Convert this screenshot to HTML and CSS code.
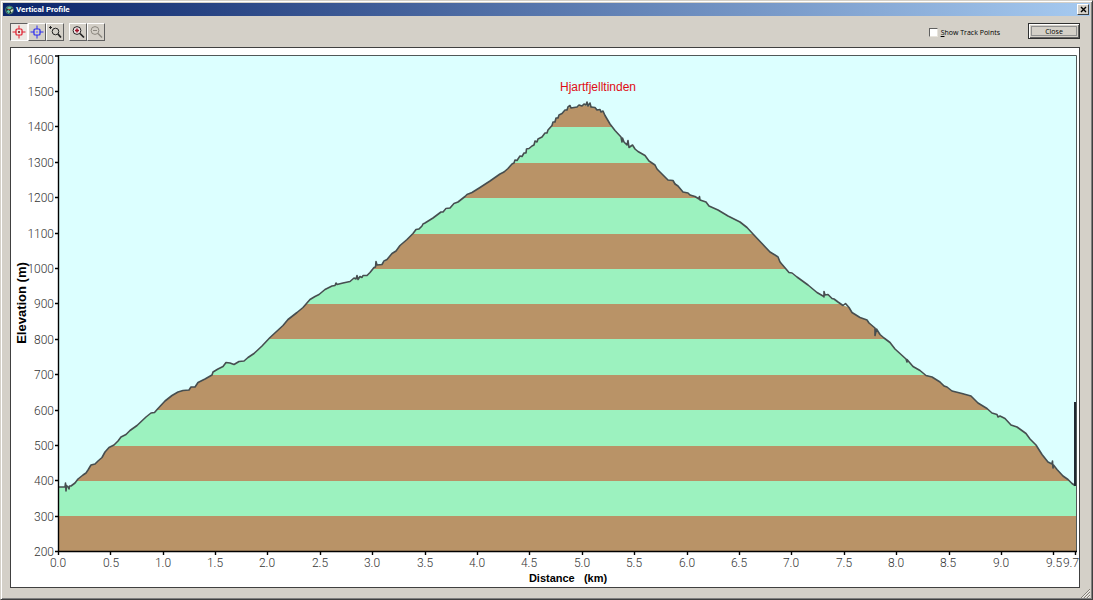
FILE: index.html
```
<!DOCTYPE html>
<html lang="en">
<head>
<meta charset="utf-8">
<title>Vertical Profile</title>
<link rel="stylesheet" href="styles.css">
</head>
<body>
<div class="window">
  <header class="titlebar">
    <svg class="app-icon" viewBox="0 0 10 10" aria-hidden="true">
      <circle cx="5" cy="5" r="4.6" fill="#16352f"/>
      <path d="M2 2.5L5 1l3 1.5-2 1.5H3zM1.5 6L4 5l2 2-2 2z" fill="#5cc4aa"/>
      <path d="M6 5l3-1v2L7 8z" fill="#d8e6c8"/>
      <path d="M3 4l3 1" stroke="#c84a3c" stroke-width="1"/>
      <circle cx="5" cy="5" r="4.4" fill="none" stroke="#7fae9c" stroke-width=".6"/>
    </svg>
    <h1 class="title">Vertical Profile</h1>
    <button class="title-close" type="button" aria-label="Close window">
      <svg viewBox="0 0 7 7"><path d="M1 1l5 5M6 1l-5 5" stroke="#000" stroke-width="1.400"/></svg>
    </button>
  </header>

  <div class="toolbar">
    <div class="tools">
      <button class="tool tool-active" type="button" aria-label="Center on point">
        <svg viewBox="0 0 14 14" fill="none" stroke="#e01c2c"><path d="M7 .5v3.500M7 10v3.500M.5 7h3.500M10 7h3.500"/><rect x="4" y="4" width="6" height="6" rx="1" stroke-width="1.200"/><path d="M6 7h2M7 6v2" stroke="#7a0000"/></svg>
      </button>
      <button class="tool" type="button" aria-label="Pan profile">
        <svg viewBox="0 0 14 14" fill="none" stroke="#2a2af0"><path d="M7 .5v3.500M7 10v3.500M.5 7h3.500M10 7h3.500"/><rect x="4" y="4" width="6" height="6" rx="1" stroke-width="1.200"/><path d="M6 7h2M7 6v2" stroke="#8080ff"/></svg>
      </button>
      <button class="tool" type="button" aria-label="Zoom to area">
        <svg viewBox="0 0 14 14" fill="none" stroke="#222"><circle cx="7.500" cy="6.500" r="3.300"/><path d="M10 9l3 3.500" stroke-width="1.700"/><path d="M1 2.500h3M2.500 1v3"/></svg>
      </button>
    </div>
    <div class="tools">
      <button class="tool" type="button" aria-label="Zoom in">
        <svg viewBox="0 0 14 14" fill="none" stroke="#222"><circle cx="6" cy="5.500" r="3.900" fill="#eee8e8"/><path d="M9 8.500l4 4" stroke-width="1.700"/><path d="M4 5.500h4M6 3.500v4" stroke="#a01028" stroke-width="1.500"/></svg>
      </button>
      <button class="tool" type="button" aria-label="Zoom out">
        <svg viewBox="0 0 14 14" fill="none" stroke="#8c8880"><circle cx="6" cy="5.500" r="3.900"/><path d="M9 8.500l4 4" stroke-width="1.500"/><path d="M4 5.500h4"/></svg>
      </button>
    </div>
    <label class="track"><input class="check" type="checkbox"><span><u>S</u>how Track Points</span></label>
    <button class="close" type="button"><span class="close-face">Close</span></button>
  </div>

  <main class="panel">
    <svg class="chart" viewBox="11 48 1068 539" role="img" aria-label="Elevation profile of Hjartfjelltinden">
      <defs>
        <clipPath id="mountain">
          <path d="M59 551V487L63.500 487L70.500 486.500L75 483L78 479L83 475L86 473L88 470L91 465L95 464L98 461L102 457.500L105 452L109 447.500L114 445L118 441L121 437L126 434.500L130 430.500L137 425.500L146 417L151 413L154.500 412.500L158 408.500L165 401L172 395.500L178 392L183 390.500L189 390L191 387L195 387L198 382.500L205 379L212 375L213 372L218 369L223 366.500L226 362.500L230 363L234 364.500L239 361.500L244 361L248 357.500L254 353.500L262 346L270 337.500L283 325.500L288 319.500L297 312.500L303 307.500L310 299.500L315 296.500L319 294.500L325 289.500L332 286L337 284L343 283L350 281.500L355 278L360 276.500L367 275.500L370 272.500L374 267.500L377 265L382 264.500L387 259.500L392 253.500L396 251L400 245.500L407 239.500L413 233.500L416 229.500L422 226.500L425 223L433 218L441 212.500L450 208L458 201.500L465 196.500L472 192.500L480 187.500L490 181L500 174L508 168.500L515 161.500L522 156L526 151L532 146.500L535 142L542 137L547 132L552 125.500L556 118.500L562 113.500L567 109L570 107L577 107L582 105L591 106L595 108L600 110.500L603 111.500L605 115.500L610 124L615 130.500L621 138L627 145L633 146L638 151.500L645 155.500L649 161L655 165L659 171L668 180L673 180.500L678 186L683 192L688 193.500L695 196.500L706 202L709 206L718 210L728 216L740 222L747 227.500L753 234L762 243.500L770 252L778 258L783 265.500L789 272.500L797 277L808 285L817 292.500L823 296L828 295L832 298.500L838 302L843 305.500L849 307.500L852 312.500L860 317.500L867 320.500L875 328L880 334.500L890 342.500L895 349L907 360L913 366.500L920 370.500L926 375.500L932 377.500L940 382L947 387.500L952 391L962 393.500L971 396L978 403L987 408.500L992 413L1000 416L1005 418.500L1011 425L1017 427L1026 433.500L1030 439L1036 445L1042 454.500L1048 462L1052 464.500L1057 469.500L1063 476L1068 479.500L1072 483.500L1076 485.500V551Z"/>
        </clipPath>
      </defs>
      <rect class="sky" x="59" y="56" width="1017" height="495"/>
      <g clip-path="url(#mountain)">
        <rect class="green" x="59" y="100" width="1017" height="451"/>
        <path class="brown" d="M59 100h1017v27H59zM59 163h1017v35H59zM59 234h1017v35H59zM59 304h1017v35H59zM59 375h1017v35H59zM59 446h1017v35H59zM59 516h1017v35H59z"/>
      </g>
      <path class="ridge" d="M59 487L65 487L65.500 483L66 491L66.500 485.500L68 487L69 489L69.500 486L71 486L75 483L78 479L83 475L86 473L88 470L91 465L95 464L98 461L102 457.500L105 452L109 447.500L114 445L118 441L121 437L126 434.500L130 430.500L137 425.500L146 417L151 413L154.500 412.500L158 408.500L165 401L172 395.500L178 392L183 390.500L189 390L191 387L195 387L198 382.500L205 379L212 375L213 372L218 369L223 366.500L226 362.500L230 363L234 364.500L239 361.500L244 361L248 357.500L254 353.500L262 346L270 337.500L283 325.500L288 319.500L297 312.500L303 307.500L310 299.500L315 296.500L319 294.500L325 289.500L332 286L335 285.500L336 283L337 284.500L343 283L350 281.500L354 278L356 279L357 275.500L358 279.500L360 276.500L362 277.500L363 275.500L367 275.500L370 272.500L374 267.500L375.500 267L376 261.500L377 265L382 264.500L384 261L387 259.500L392 253.500L396 251L400 245.500L407 239.500L413 233.500L416 229.500L419 229L422 226L423 224L425 223L433 218L437 215L441 212L443 212L446 208.500L450 208L454 203.500L458 202L465 196.500L467 194.500L472 192.500L480 187.500L490 181L500 174L504 172L508 168.500L512 164L514 163L515 160L517 160.500L520 156L522 156.500L524 153L526 153L526.500 149L529 148.500L532 146L534 145L535 141L537 142L538 139L542 137L545 133L547 133L548 130L552 125.500L553 122L555 122L556 118L558 118L559 115L562 113.500L565 110L567 110L568 107L570 105.500L571 108L577 107L579 105L582 106L584 104L586 105L587 102L588 106L590 103L591 107L595 107.500L597 110L600 109.500L601 112L603 111L605 115.500L610 124L615 130.500L621 137L622 142L622.500 138L624 142L627 145L628 140.500L629 147.500L632.500 145L635 149L638 151.500L645 155.500L649 161L655 165L657 169L661 173L668 180L673 180.500L675 184L678 186L683 192L688 193L690 195L695 196.500L699 199L699.500 196.500L700 200L706 202L709 206L718 210L728 216L740 222L747 227.500L753 234L762 243.500L770 252L775 255L778 257L780 262L783 265.500L789 272.500L792 273L797 277L808 285L817 292.500L823 296L824 297V291.500L825 295L828 294.500L832 298.500L834 299L838 302L843 305.500L845.500 303.500L849 307.500L852 312.500L860 317.500L867 320L869 323L875 328V335.500L876.500 329L880 334.500L884 338L890 342.500L895 349L906 359L907 362V359.500L913 366.500L920 370.500L926 375.500L932 377L940 382L944 386L947 387L952 391L962 393.500L971 396L974 399L978 403L987 408.500L992 413L997 414.500L998 417L1000 416L1005 418.500L1011 425L1017 427L1026 433.500L1030 439L1036 445L1042 454.500L1048 462L1052 464L1052.500 461L1053 468L1053.500 465L1057 469.500L1063 476L1068 479.500L1072 483.500L1075 485.500"/>
      <path class="jump" d="M1075 486V402"/>
      <path class="frame" d="M59 55.500H1076.500V551"/>
      <path class="axis" d="M58.500 55V552M58 551.500H1077"/>
      <path class="axis" d="M55 56h4M55 91.500h4M55 126.500h4M55 162.500h4M55 197.500h4M55 233.500h4M55 268.500h4M55 303.500h4M55 339.500h4M55 374.500h4M55 410.500h4M55 445.500h4M55 480.500h4M55 516.500h4M55 551.500h4M58.500 551v4M110.500 551v4M163.500 551v4M215.500 551v4M267.500 551v4M320.500 551v4M372.500 551v4M425.500 551v4M477.500 551v4M529.500 551v4M582.500 551v4M634.500 551v4M687.500 551v4M739.500 551v4M791.500 551v4M844.500 551v4M896.500 551v4M949.500 551v4M1001.500 551v4M1053.500 551v4M1075.500 551v4"/>
      <g class="value value-y">
        <text x="54" y="64">1600</text><text x="54" y="96">1500</text><text x="54" y="131">1400</text><text x="54" y="167">1300</text><text x="54" y="202">1200</text><text x="54" y="238">1100</text><text x="54" y="273">1000</text><text x="54" y="308">900</text><text x="54" y="344">800</text><text x="54" y="379">700</text><text x="54" y="415">600</text><text x="54" y="450">500</text><text x="54" y="485">400</text><text x="54" y="521">300</text><text x="54" y="556">200</text>
      </g>
      <g class="value value-x">
        <text x="58" y="567">0.0</text><text x="111" y="567">0.5</text><text x="163" y="567">1.0</text><text x="215" y="567">1.5</text><text x="267" y="567">2.0</text><text x="320" y="567">2.5</text><text x="372" y="567">3.0</text><text x="425" y="567">3.5</text><text x="477" y="567">4.0</text><text x="529" y="567">4.5</text><text x="582" y="567">5.0</text><text x="634" y="567">5.5</text><text x="687" y="567">6.0</text><text x="739" y="567">6.5</text><text x="791" y="567">7.0</text><text x="844" y="567">7.5</text><text x="896" y="567">8.0</text><text x="948" y="567">8.5</text><text x="1001" y="567">9.0</text><text x="1054" y="567">9.5</text><text x="1071" y="567">9.7</text>
      </g>
      <text class="caption" x="568" y="582">Distance &#160; (km)</text>
      <text class="caption caption-y" transform="translate(26 303) rotate(-90)">Elevation (m)</text>
      <text class="peak" x="598" y="91">Hjartfjelltinden</text>
    </svg>
  </main>
  <footer class="grip">
    <svg class="grip-icon" viewBox="0 0 10 10" aria-hidden="true"><path d="M1 10L10 1M4 10L10 4M7 10L10 7" stroke="#858178"/><path d="M2 10L10 2M5 10L10 5M8 10L10 8" stroke="#fff" stroke-width=".6"/></svg>
  </footer>
</div>
</body>
</html>
```
FILE: styles.css
```
* { box-sizing: border-box; }

body {
  margin: 0;
  background: #d4d0c8;
  color: #000;
  font-family: "Open Sans", "Noto Sans", sans-serif;
}

button { font: inherit; color: inherit; }

.window {
  display: flex;
  flex-direction: column;
  min-height: 100vh;
  padding: 1px;
  border: 1px solid;
  border-color: #d4d0c8 #404040 #404040 #d4d0c8;
  box-shadow: inset 1px 1px #fff, inset -1px -1px #808080;
}

.titlebar {
  display: flex;
  align-items: center;
  gap: 2px;
  height: 13px;
  margin: 1px 1px 0;
  padding: 0 1px 0 2px;
  background: linear-gradient(to right, #0a246a, #a6caf0);
}

.app-icon { width: 9px; height: 10px; }

.title {
  flex: 1;
  margin: 0;
  color: #fff;
  font-family: Roboto, sans-serif;
  font-size: 8px;
  font-weight: 700;
  line-height: 12px;
}

.title-close {
  display: flex;
  align-items: center;
  justify-content: center;
  width: 12px;
  height: 11px;
  padding: 0;
  border: 1px solid;
  border-color: #fff #404040 #404040 #fff;
  background: #d4d0c8;
}

.title-close svg { width: 7px; height: 7px; }

.toolbar {
  display: flex;
  align-items: flex-start;
  height: 31px;
  padding: 7px 11px 0 8px;
}

.tools { display: flex; margin-right: 5px; }

.tool {
  display: flex;
  align-items: center;
  justify-content: center;
  width: 18px;
  height: 18px;
  padding: 0;
  border: 1px solid;
  border-color: #fff #606060 #606060 #fff;
  background: #d4d0c8;
}

.tool-active {
  border-color: #606060 #fff #fff #606060;
  background: #ece9e4;
}

.tool svg { width: 14px; height: 14px; }

.track {
  display: flex;
  align-items: center;
  gap: 3px;
  height: 18px;
  margin-left: auto;
  margin-right: 28px;
  font-size: 7px;
}

.check {
  appearance: none;
  width: 9px;
  height: 9px;
  margin: 0;
  border: 1px solid;
  border-color: #606060 #e8e4dc #e8e4dc #606060;
  background: #fff;
}

.close {
  display: flex;
  width: 52px;
  height: 16px;
  padding: 1px;
  border: 1px solid #303030;
  background: #d4d0c8;
  box-shadow: inset 1px 1px #fff, inset -1px -1px #606060;
  font-size: 7px;
}

.close-face {
  flex: 1;
  margin: 1px;
  border: 1px solid #909090;
  line-height: 9px;
  text-align: center;
}

.panel {
  flex: 1;
  display: flex;
  margin: 0 11px 0 8px;
  border: 1px solid #404040;
  background: #fff;
}

.chart { display: block; width: 100%; }

.sky { fill: #dcffff; }
.green { fill: #9cf2bf; }
.brown { fill: #b99367; }

.ridge { fill: none; stroke: #464e50; stroke-width: 1.6; stroke-linejoin: round; }
.jump { stroke: #202830; stroke-width: 2; }
.frame { fill: none; stroke: #505858; }
.axis { fill: none; stroke: #000; stroke-width: 1.4; }

.value {
  fill: #333;
  font-family: Roboto, "Liberation Sans", sans-serif;
  font-size: 12px;
  font-weight: 300;
}

.value-y { text-anchor: end; }
.value-x { text-anchor: middle; }

.caption {
  font-family: "Liberation Sans", Arial, sans-serif;
  font-size: 11px;
  font-weight: 700;
  text-anchor: middle;
}

.caption-y { font-size: 13px; }

.peak {
  fill: #e00c14;
  font-family: "Liberation Sans", Arial, sans-serif;
  font-size: 12px;
  text-anchor: middle;
}

.grip {
  display: flex;
  justify-content: flex-end;
  height: 10px;
  padding-right: 1px;
}

.grip-icon { width: 10px; height: 10px; }
```
